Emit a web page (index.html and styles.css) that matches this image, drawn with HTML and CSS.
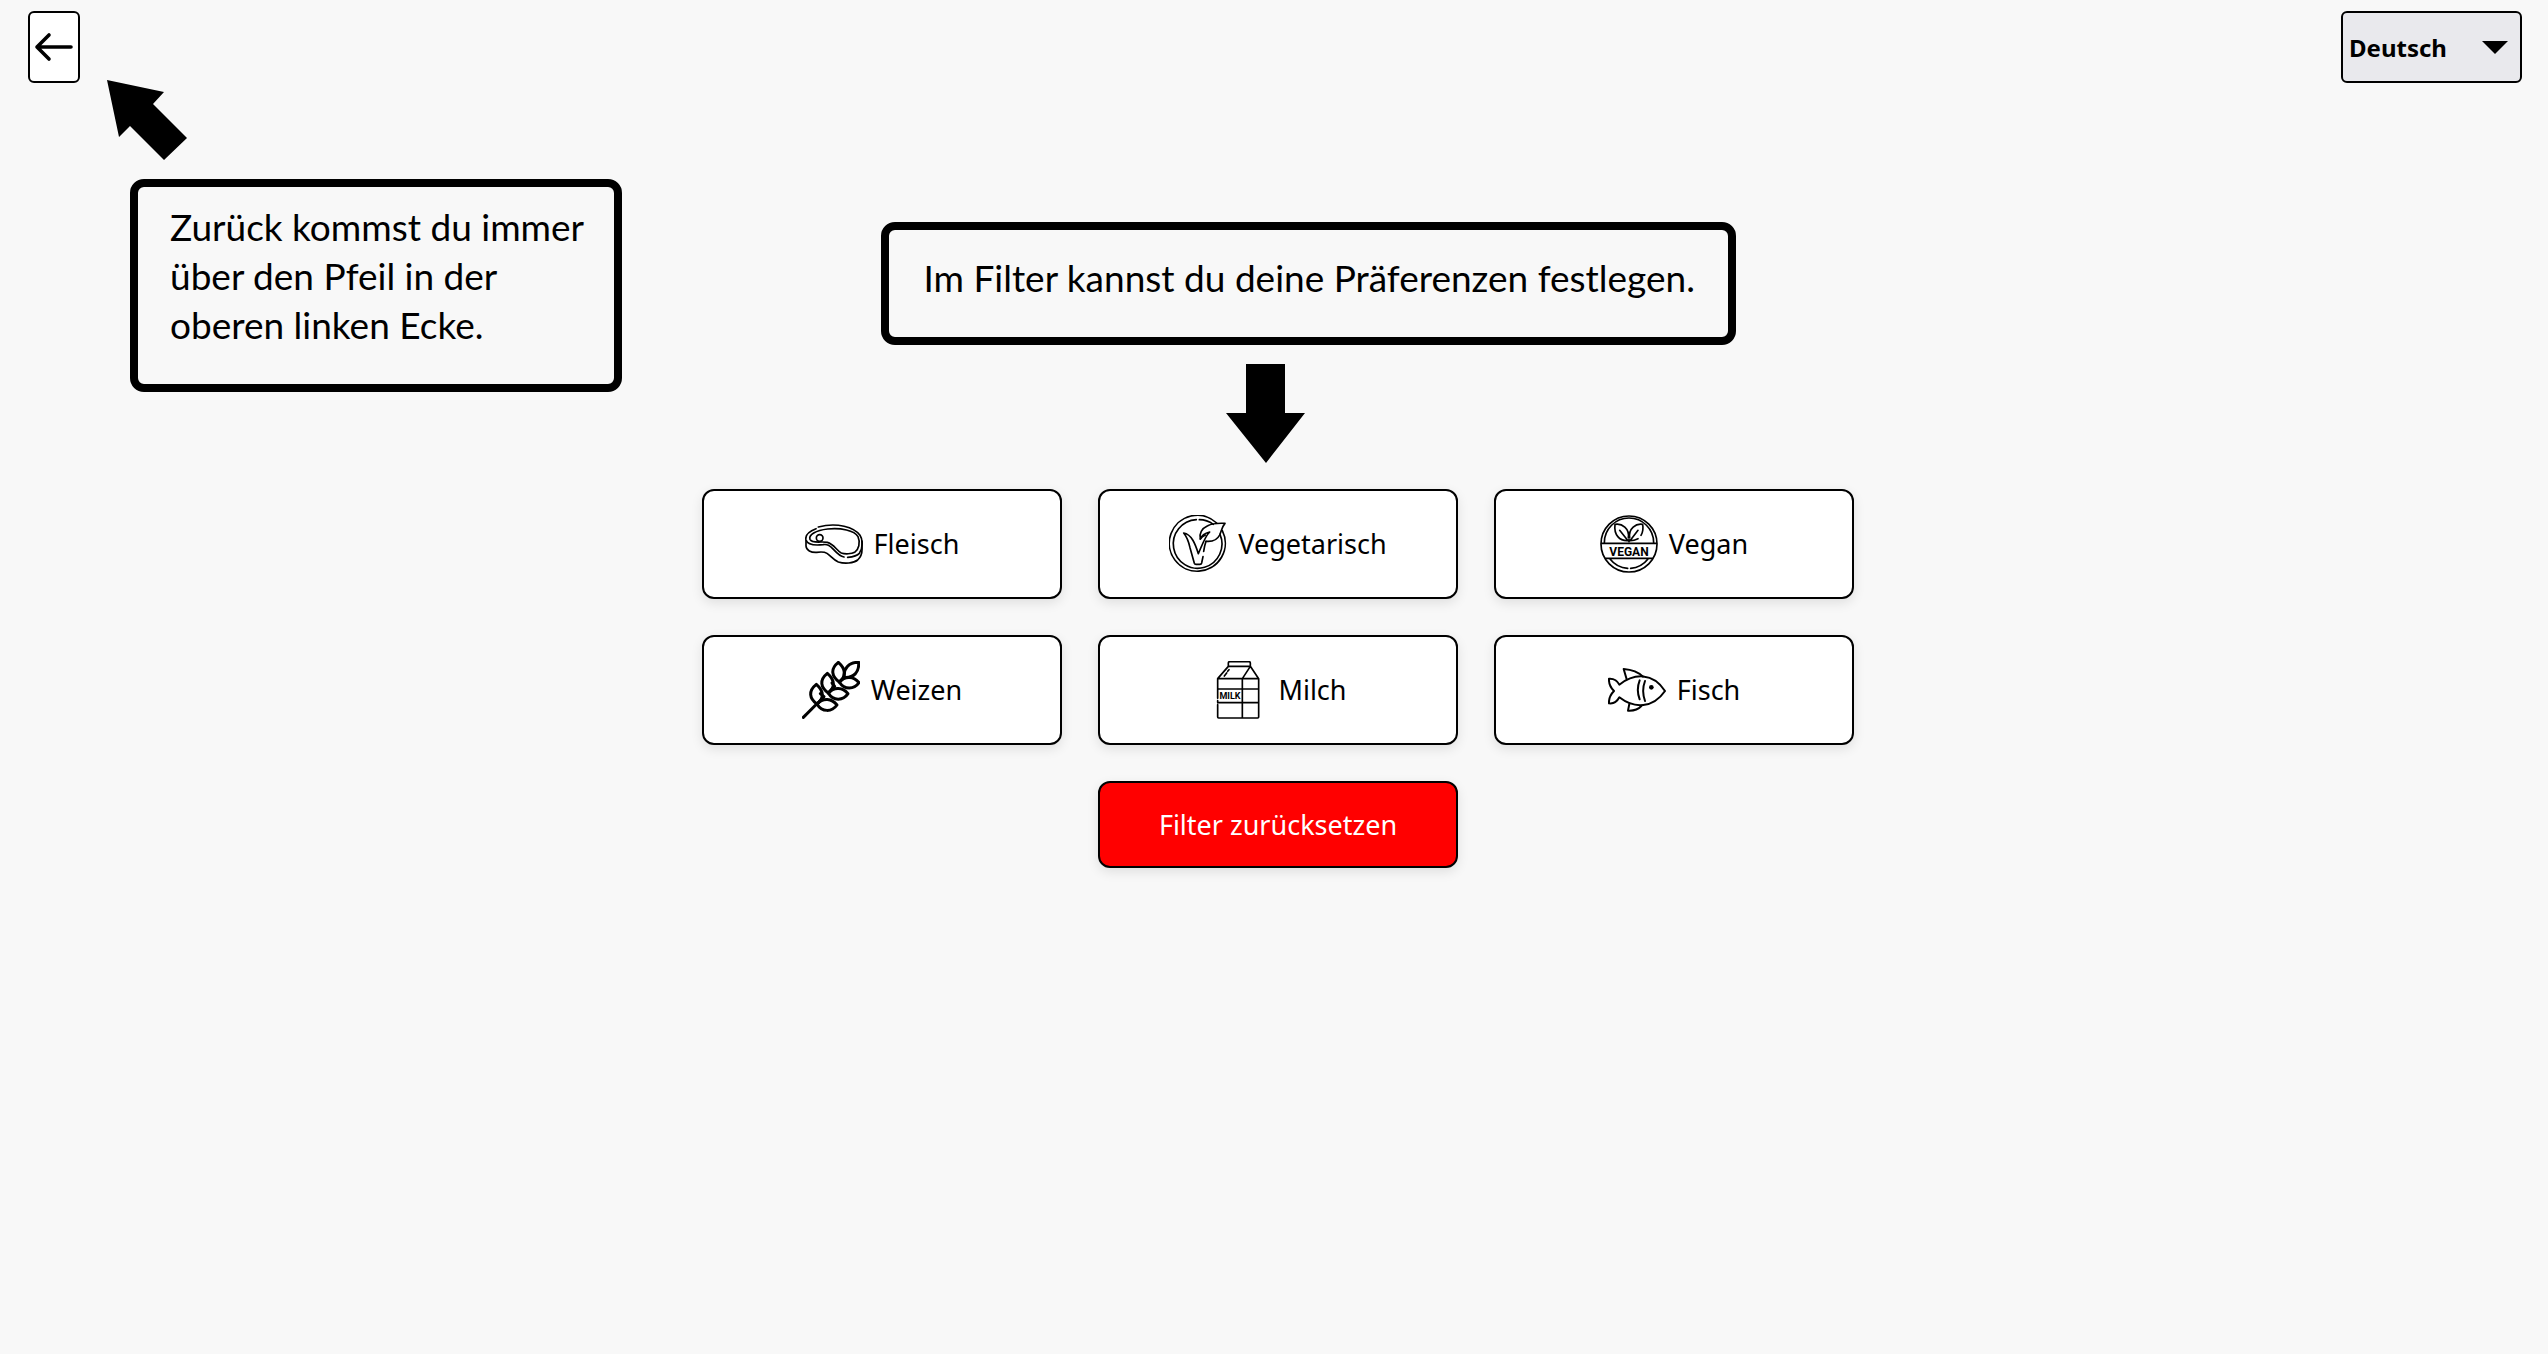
FILE: index.html
```html
<!DOCTYPE html>
<html lang="de">
<head>
  <meta charset="utf-8">
  <meta name="viewport" content="width=device-width, initial-scale=1">
  <title>Filter</title>
  <link rel="stylesheet" href="styles.css">
</head>
<body>
  <header class="topbar">
    <button class="back" type="button" aria-label="Zurück">
      <svg class="back-icon" viewBox="0 0 38 28" aria-hidden="true"><path d="M36 14H2M14 2 2 14l12 12"/></svg>
    </button>
    <div class="language">
      <select class="language-select" aria-label="Sprache">
        <option selected>Deutsch</option>
        <option>English</option>
      </select>
      <svg class="language-caret" viewBox="0 0 26 13" aria-hidden="true"><path d="M0 0h26L13 13z"/></svg>
    </div>
  </header>

  <section class="hints">
    <div class="hint hint-back">
      <svg class="pointer pointer-back" viewBox="0 0 80 80" aria-hidden="true"><path d="M0 0 57 12 46 24 80 58 57 80 23 46 12 57z"/></svg>
      <p class="hint-box">Zurück kommst du immer<br>über den Pfeil in der<br>oberen linken Ecke.</p>
    </div>
    <div class="hint hint-filter">
      <p class="hint-box">Im Filter kannst du deine Präferenzen festlegen.</p>
      <svg class="pointer pointer-filter" viewBox="0 0 79 99" aria-hidden="true"><path d="M20 0h39v49h20L40 99 0 49h20z"/></svg>
    </div>
  </section>

  <main class="content">
    <div class="filters">
      <button class="card" type="button">
        <svg class="icon icon-steak" viewBox="42 45 174 174" aria-hidden="true">
          <path d="M82 81C138 66 190 82 207 106C216 119 216 145 205 160C199 167 189 170 170 172M159 171C147 169 139 161 128 149C116 136 109 132 96 134C70 137 50 134 45 120C42 107 54 94 75 86"/>
          <path d="M57 118C52 105 74 91 110 87C150 83 190 91 201 110C209 128 203 149 191 157C182 162 162 163 151 159C138 153 129 132 109 127C92 123 64 132 57 118Z"/>
          <path d="M45 122V138C46 151 60 158 77 157C91 155 100 155 108 160C121 169 126 179 142 186C161 192 188 190 200 180C211 170 214 158 213 143V123"/>
          <circle cx="86" cy="114" r="10"/>
        </svg>
        <span>Fleisch</span>
      </button>
      <button class="card" type="button">
        <svg class="icon icon-veggie" viewBox="45 45 174 174" aria-hidden="true">
          <path d="M188 69A84 84 0 1 0 205 92"/>
          <path d="M178 73A73 73 0 0 0 136 59M127 59A73 73 0 1 0 198 103"/>
          <path d="M213 70C192 69 173 71 161 77C143 85 135 101 139 117C142 112 148 108 154 105M213 70C204 80 203 92 197 105C190 119 176 126 156 124"/>
          <path d="M139 117C143 106 154 99 167 96C153 109 145 134 133 161C124 132 113 103 89 99C101 113 104 125 108 143L121 190Q122 193 126 193H138Q142 193 143 189L147 170M156 124Q151 139 149 154"/>
        </svg>
        <span>Vegetarisch</span>
      </button>
      <button class="card" type="button">
        <svg class="icon icon-vegan" viewBox="45 45 174 174" aria-hidden="true">
          <circle cx="132" cy="132" r="84"/>
          <path d="M58 128A74 74 0 0 1 206 128M75 177A73 73 0 0 0 128 205M137 205A73 73 0 0 0 189 177M50 130H214M62 175H202"/>
          <path d="M132 125V118M128 122C104 123 86 105 90 73C111 69 134 86 130 113M104 91 129 122M136 122C145 122 153 119 159 116M168 106C174 96 175 84 173 73C153 69 130 86 134 113M159 91 135 122"/>
          <text class="icon-word" x="132" y="167" font-size="36" text-anchor="middle">VEGAN</text>
        </svg>
        <span>Vegan</span>
      </button>
      <button class="card" type="button">
        <svg class="icon icon-wheat" viewBox="36 48 174 174" aria-hidden="true">
          <path d="M40 217 80 177"/>
          <path d="M79 118C54 138 58 160 81 177C103 160 102 138 79 118Z"/>
          <path d="M112 85C87 105 92 127 115 144C136 127 135 105 112 85Z"/>
          <path d="M145 52C120 72 125 94 148 111C169 94 168 72 145 52Z"/>
          <path d="M81 177C96 203 126 201 141 180C125 160 100 157 81 177Z"/>
          <path d="M115 144C130 170 160 167 174 146C158 127 133 125 115 144Z"/>
          <path d="M148 111C163 136 193 134 207 113C191 94 166 92 148 111Z"/>
          <path d="M206 52C177 51 159 72 163 97C191 99 208 82 206 52Z"/>
          <path d="M81 177 102 155 91 146M115 144 134 124 126 114M148 111 163 97"/>
        </svg>
        <span>Weizen</span>
      </button>
      <button class="card" type="button">
        <svg class="icon icon-milk" viewBox="46 48 174 174" aria-hidden="true">
          <path d="M72 160V101L104 64H170L195 101V216Q195 219 192 219H75Q72 219 72 216V179M72 167V171M104 64V54Q104 50 108 50H166Q170 50 170 54V64M72 101H195M170 64 146 101V219M72 132H195M72 173H195"/>
          <path d="M106 74 102 79M99 84 92 93"/>
          <text class="icon-word" x="109" y="163" font-size="27" text-anchor="middle">MILK</text>
        </svg>
        <span>Milch</span>
      </button>
      <button class="card" type="button">
        <svg class="icon icon-fish" viewBox="51 48 174 174" aria-hidden="true">
          <path d="M85 119C130 84 186 82 222 138C186 190 130 192 85 157C78 170 68 177 54 175C53 161 58 149 69 138C58 127 53 115 54 101C68 100 79 107 85 119Z"/>
          <path d="M107 103 98 72C122 74 142 81 156 95M115 177 111 197C128 198 142 193 151 183M146 106Q135 134 146 163M162 108Q151 137 162 168"/>
          <circle class="icon-dot" cx="181" cy="127" r="7"/>
        </svg>
        <span>Fisch</span>
      </button>
      <button class="card card-reset" type="reset">Filter zurücksetzen</button>
    </div>
  </main>
</body>
</html>
```
FILE: styles.css
```css
* {
  box-sizing: border-box;
}

body {
  margin: 0;
  min-height: 100vh;
  background: #f8f8f8;
  color: #000;
  font-family: "Noto Sans", sans-serif;
}

.topbar {
  display: flex;
  justify-content: space-between;
  padding: 11px 26px 0 28px;
}

.back {
  display: flex;
  align-items: center;
  justify-content: center;
  width: 52px;
  height: 72px;
  padding: 0;
  border: 2px solid #000;
  border-radius: 6px;
  background: #fff;
}

.back-icon {
  flex: none;
  width: 38px;
  height: 28px;
  fill: none;
  stroke: #000;
  stroke-width: 3.6;
  stroke-linecap: round;
  stroke-linejoin: round;
  overflow: visible;
}

.language {
  position: relative;
}

.language-select {
  appearance: none;
  width: 181px;
  height: 72px;
  padding: 0 44px 0 6px;
  border: 2px solid #000;
  border-radius: 6px;
  background: #e9e9ed;
  color: #000;
  font: bold 24px "Noto Sans", sans-serif;
}

.language-caret {
  position: absolute;
  top: 30px;
  right: 14px;
  width: 26px;
  height: 13px;
  pointer-events: none;
}

/* Onboarding hints with pointers to the controls */
.hints {
  display: grid;
  grid-template-columns: 1fr auto 1fr;
  align-items: start;
  margin-top: -3px;
  padding-left: 68px;
}

.hint {
  display: flex;
  flex-direction: column;
}

.hint-back {
  align-items: flex-start;
  gap: 19px;
  padding-left: 39px;
}

.hint-back .hint-box {
  width: 492px;
  margin-left: 23px;
  padding-top: 15px;
}

.hint-filter {
  gap: 19px;
  padding-top: 142px;
}

.hint-filter .hint-box {
  width: 855px;
  padding-left: 35px;
}

.hint-box {
  margin: 0;
  padding: 23px 0 35px 32px;
  border: 8px solid #000;
  border-radius: 14px;
  font: 37px/49px Lato, sans-serif;
  white-space: nowrap;
}

.pointer {
  flex: none;
}

.pointer-back {
  width: 80px;
  height: 80px;
}

.pointer-filter {
  width: 79px;
  height: 99px;
  margin-left: 345px;
}

.content {
  padding: 26px 0 0 8px;
}

.filters {
  display: grid;
  grid-template-columns: repeat(3, 1fr);
  gap: 36px;
  max-width: 1152px;
  margin: 0 auto;
}

.card {
  display: flex;
  align-items: center;
  justify-content: center;
  gap: 11px;
  height: 110px;
  padding: 0;
  border: 2px solid #000;
  border-radius: 12px;
  background: #fff;
  box-shadow: 0 4px 12px rgba(0, 0, 0, 0.1);
  color: #000;
  font: 27px/36px "Noto Sans", sans-serif;
}

.card-reset {
  grid-column: 2;
  height: 87px;
  background: #f00;
  color: #fff;
}

.icon {
  flex: none;
  width: 58px;
  height: 58px;
  fill: none;
  stroke: #000;
  stroke-width: 5;
  stroke-linecap: round;
  stroke-linejoin: round;
}

.icon-wheat {
  stroke-width: 9;
}

.icon-fish {
  stroke-width: 6;
}

.icon-dot {
  fill: #000;
  stroke: none;
}

.icon-word {
  fill: #000;
  stroke: none;
  font-family: Roboto, sans-serif;
  font-weight: bold;
}
```
